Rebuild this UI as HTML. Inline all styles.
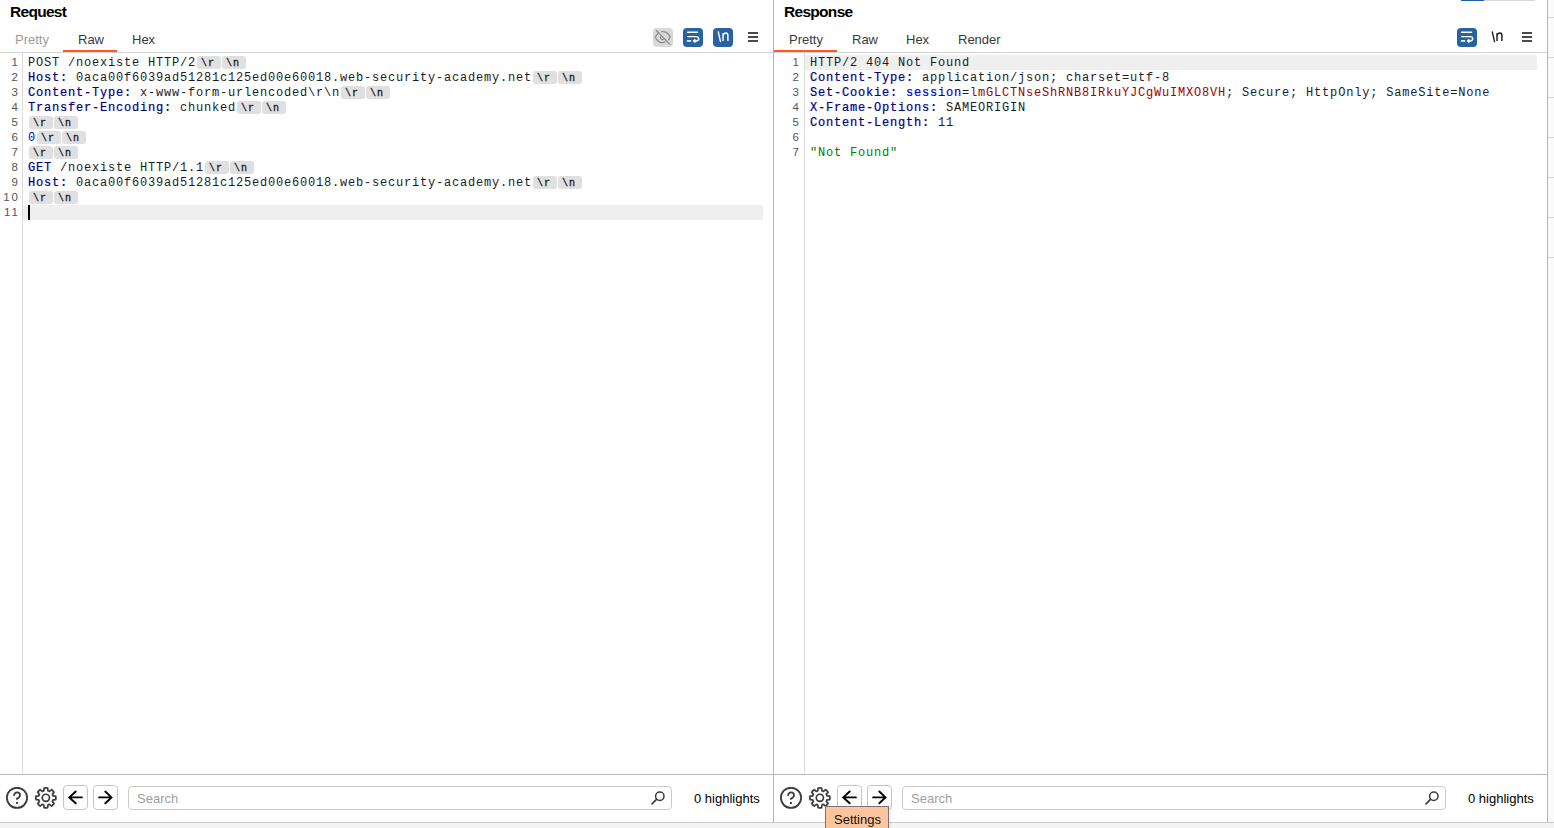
<!DOCTYPE html>
<html><head><meta charset="utf-8">
<style>
*{margin:0;padding:0;box-sizing:border-box}
html,body{width:1554px;height:828px;overflow:hidden;background:#fff;position:relative;font-family:"Liberation Sans",sans-serif;color:#333}
.a{position:absolute}
.title{font-weight:bold;font-size:15.5px;letter-spacing:-0.7px;color:#000;line-height:16px}
.tab{font-size:13px;line-height:15px;color:#3a3a3a;white-space:nowrap}
.hl{background:#efefef}
.code{font-family:"Liberation Mono",monospace;font-size:12px;letter-spacing:0.8px;line-height:15px;white-space:pre;color:#1c1c1c}
.ln{font-size:11.5px;line-height:15px;color:#555;text-align:right;width:20px;letter-spacing:2px}
.k{color:#000080;-webkit-text-stroke:0.2px #000080}
.b{color:#0000d0}
.v{color:#a00000}
.g{color:#008000}
.bd{display:inline-block;width:24px;height:13px;margin-left:1px;background:#e0e0e0;border-radius:3px;vertical-align:top;margin-top:0;font-size:10px;letter-spacing:1px;line-height:16px;text-align:left;padding-left:4px;-webkit-text-stroke:0.3px #1a1a1a;color:#1a1a1a}
.ib{width:20px;height:19px;border-radius:4px;background:#2d6198}
.ham{width:10px;height:2px;background:#4a4a4a}
.btn{border:1px solid #c8c4c4;border-radius:4px;width:25px;height:25px}
.search{border:1px solid #cfcaca;border-radius:4px;height:24px}
.ph{font-size:13px;color:#a0a0a0;line-height:15px}
</style></head><body>

<!-- REQUEST PANEL -->
<div class="a title" style="left:10px;top:4px">Request</div>
<div class="a tab" style="left:15px;top:32px;color:#9c9c9c">Pretty</div>
<div class="a tab" style="left:78px;top:32px">Raw</div>
<div class="a tab" style="left:132px;top:32px">Hex</div>
<div class="a" style="left:63px;top:50px;width:54px;height:2px;background:#ff5722"></div>
<div class="a" style="left:0;top:52px;width:773px;height:1px;background:#cfd4d4"></div>

<!-- request toolbar -->
<svg class="a" style="left:653px;top:28px" width="20" height="19" viewBox="0 0 20 19"><rect width="20" height="19" rx="4" fill="#d9d9d9"/><path d="M5.2,5.6C3.9,6.7 2.9,8 2.3,9.2C3.8,12.6 6.5,14.6 9.5,14.6C10.6,14.6 11.6,14.3 12.5,13.8M8.3,3.6C8.7,3.5 9.1,3.5 9.5,3.5C12.8,3.5 15.6,5.6 17.2,9C16.7,10.2 16.1,11.2 15.2,12.1" fill="none" stroke="#8a8a8a" stroke-width="1.25"/><path d="M7.6,8.3A2.3,2.3 0 0 0 10.6,11.4" fill="none" stroke="#8a8a8a" stroke-width="1.25"/><path d="M3,2.3L17.2,16.6" stroke="#8a8a8a" stroke-width="1.25"/></svg>
<svg class="a" style="left:683px;top:28px" width="20" height="19" viewBox="0 0 20 19"><rect width="20" height="19" rx="4" fill="#2962a0"/><path d="M4.6,4.3H14.6M4.6,8.6H13.1C14.7,8.6 15.7,9.6 15.7,10.8C15.7,12.1 14.7,12.9 13.1,12.9H11.8" fill="none" stroke="#fff" stroke-width="1.45" stroke-linecap="round"/><path d="M3.9,12.9H8.1" stroke="#fff" stroke-width="1.6"/><path d="M9.9,12.9L12.1,11.1V14.7Z" fill="#fff" stroke="#fff" stroke-width="0.7" stroke-linejoin="round"/></svg>
<svg class="a" style="left:713px;top:28px" width="20" height="19" viewBox="0 0 20 19"><rect width="20" height="19" rx="4" fill="#2962a0"/><path d="M5.3,3.9L7.5,13.6" stroke="#fff" stroke-width="1.4" stroke-linecap="round"/><path d="M10,13V5.2M10,7.5C10.5,5.8 11.6,4.9 12.9,4.9C14.3,4.9 14.9,5.9 14.9,7.5V13" fill="none" stroke="#fff" stroke-width="1.45"/></svg>
<div class="a ham" style="left:748px;top:32px"></div>
<div class="a ham" style="left:748px;top:36px"></div>
<div class="a ham" style="left:748px;top:40px"></div>

<!-- request editor -->
<div class="a" style="left:22px;top:53px;width:1px;height:721px;background:#dcdcdc"></div>
<div class="a hl" style="left:23px;top:205px;width:740px;height:15px"></div>
<div class="a" style="left:28px;top:205px;width:2px;height:15px;background:#000"></div>
<div class="a ln" style="left:0;top:55px">1<br>2<br>3<br>4<br>5<br>6<br>7<br>8<br>9<br>10<br>11</div>
<div class="a code" style="left:28px;top:56px">POST /noexiste HTTP/2<span class="bd">\r</span><span class="bd">\n</span>
<span class="k">Host:</span> 0aca00f6039ad51281c125ed00e60018.web-security-academy.net<span class="bd">\r</span><span class="bd">\n</span>
<span class="k">Content-Type:</span> x-www-form-urlencoded\r\n<span class="bd">\r</span><span class="bd">\n</span>
<span class="k">Transfer-Encoding:</span> chunked<span class="bd">\r</span><span class="bd">\n</span>
<span class="bd">\r</span><span class="bd">\n</span>
<span class="b">0</span><span class="bd">\r</span><span class="bd">\n</span>
<span class="bd">\r</span><span class="bd">\n</span>
<span class="k">GET</span> /noexiste HTTP/1.1<span class="bd">\r</span><span class="bd">\n</span>
<span class="k">Host:</span> 0aca00f6039ad51281c125ed00e60018.web-security-academy.net<span class="bd">\r</span><span class="bd">\n</span>
<span class="bd">\r</span><span class="bd">\n</span>
</div>

<!-- divider -->
<div class="a" style="left:773px;top:0;width:1px;height:822px;background:#b8b2b2"></div>

<!-- RESPONSE PANEL -->
<div class="a title" style="left:784px;top:4px">Response</div>
<div class="a tab" style="left:789px;top:32px">Pretty</div>
<div class="a tab" style="left:852px;top:32px">Raw</div>
<div class="a tab" style="left:906px;top:32px">Hex</div>
<div class="a tab" style="left:958px;top:32px">Render</div>
<div class="a" style="left:774px;top:50px;width:63px;height:2px;background:#ff5722"></div>
<div class="a" style="left:774px;top:52px;width:773px;height:1px;background:#cfd4d4"></div>

<!-- response toolbar -->
<div class="a" style="left:1461px;top:0;width:23px;height:1px;background:#1f5fa8"></div>
<div class="a" style="left:1484px;top:0;width:51px;height:1px;background:#d8d8d8"></div>
<svg class="a" style="left:1457px;top:28px" width="20" height="19" viewBox="0 0 20 19"><rect width="20" height="19" rx="4" fill="#2962a0"/><path d="M4.6,4.3H14.6M4.6,8.6H13.1C14.7,8.6 15.7,9.6 15.7,10.8C15.7,12.1 14.7,12.9 13.1,12.9H11.8" fill="none" stroke="#fff" stroke-width="1.45" stroke-linecap="round"/><path d="M3.9,12.9H8.1" stroke="#fff" stroke-width="1.6"/><path d="M9.9,12.9L12.1,11.1V14.7Z" fill="#fff" stroke="#fff" stroke-width="0.7" stroke-linejoin="round"/></svg>
<svg class="a" style="left:1487px;top:28px" width="20" height="19" viewBox="0 0 20 19"><path d="M5.3,3.9L7.5,13.6" stroke="#1e1e1e" stroke-width="1.4" stroke-linecap="round"/><path d="M10,13V5.2M10,7.5C10.5,5.8 11.6,4.9 12.9,4.9C14.3,4.9 14.9,5.9 14.9,7.5V13" fill="none" stroke="#1e1e1e" stroke-width="1.45"/></svg>
<div class="a ham" style="left:1522px;top:32px"></div>
<div class="a ham" style="left:1522px;top:36px"></div>
<div class="a ham" style="left:1522px;top:40px"></div>

<!-- response editor -->
<div class="a" style="left:804px;top:53px;width:1px;height:721px;background:#dcdcdc"></div>
<div class="a hl" style="left:805px;top:55px;width:732px;height:15px"></div>
<div class="a ln" style="left:781px;top:55px">1<br>2<br>3<br>4<br>5<br>6<br>7</div>
<div class="a code" style="left:810px;top:56px">HTTP/2 404 Not Found
<span class="k">Content-Type:</span> application/json; charset=utf-8
<span class="k">Set-Cookie:</span> <span class="b" style="-webkit-text-stroke:0.2px #0000d0">session</span>=<span class="v">lmGLCTNseShRNB8IRkuYJCgWuIMXO8VH</span>; Secure; HttpOnly; SameSite=None
<span class="k">X-Frame-Options:</span> SAMEORIGIN
<span class="k">Content-Length:</span> 11

<span class="g">"Not Found"</span>
</div>

<!-- right strip -->
<div class="a" style="left:1547px;top:0;width:1px;height:822px;background:#b8b2b2"></div>
<div class="a" style="left:1548px;top:0;width:6px;height:822px;background:#fafafa"></div>
<div class="a" style="left:1548px;top:17px;width:6px;height:1px;background:#d0d0d0"></div>
<div class="a" style="left:1548px;top:57px;width:6px;height:1px;background:#d0d0d0"></div>
<div class="a" style="left:1548px;top:97px;width:6px;height:1px;background:#d0d0d0"></div>
<div class="a" style="left:1548px;top:137px;width:6px;height:1px;background:#d0d0d0"></div>
<div class="a" style="left:1548px;top:177px;width:6px;height:1px;background:#d0d0d0"></div>
<div class="a" style="left:1548px;top:217px;width:6px;height:1px;background:#d0d0d0"></div>
<div class="a" style="left:1548px;top:257px;width:6px;height:1px;background:#d0d0d0"></div>

<!-- BOTTOM BARS -->
<div class="a" style="left:0;top:774px;width:1547px;height:1px;background:#c0b8b8"></div>
<div class="a" style="left:0;top:822px;width:1554px;height:1px;background:#cfcaca"></div>
<div class="a" style="left:0;top:823px;width:1554px;height:5px;background:#f4f4f4"></div>

<!-- request bottom -->
<svg class="a" style="left:6px;top:787px" width="22" height="22" viewBox="0 0 22 22"><circle cx="11" cy="10.85" r="10.1" fill="none" stroke="#3c3c3c" stroke-width="1.8"/><path d="M8.1,8.2C8.4,6.4 9.7,5.4 11.1,5.4C12.7,5.4 14,6.6 14,8.2C14,9.9 12.6,10.9 10.8,11.9" fill="none" stroke="#3c3c3c" stroke-width="1.8" stroke-linecap="round"/><rect x="10" y="15" width="1.9" height="1.9" fill="#3c3c3c"/></svg>
<svg class="a" style="left:34px;top:786px" width="24" height="24" viewBox="0 0 24 24"><path d="M9.83,4.76L10.13,2.02A10.00,10.00 0 0 1 13.61,2.02L13.91,4.76A7.40,7.40 0 0 1 15.46,5.40L17.61,3.68A10.00,10.00 0 0 1 20.06,6.13L18.34,8.28A7.40,7.40 0 0 1 18.98,9.83L21.72,10.13A10.00,10.00 0 0 1 21.72,13.61L18.98,13.91A7.40,7.40 0 0 1 18.34,15.46L20.06,17.61A10.00,10.00 0 0 1 17.61,20.06L15.46,18.34A7.40,7.40 0 0 1 13.91,18.98L13.61,21.72A10.00,10.00 0 0 1 10.13,21.72L9.83,18.98A7.40,7.40 0 0 1 8.28,18.34L6.13,20.06A10.00,10.00 0 0 1 3.68,17.61L5.40,15.46A7.40,7.40 0 0 1 4.76,13.91L2.02,13.61A10.00,10.00 0 0 1 2.02,10.13L4.76,9.83A7.40,7.40 0 0 1 5.40,8.28L3.68,6.13A10.00,10.00 0 0 1 6.13,3.68L8.28,5.40Z" fill="none" stroke="#3c3c3c" stroke-width="1.75" stroke-linejoin="round"/><circle cx="11.87" cy="11.87" r="3.6" fill="none" stroke="#3c3c3c" stroke-width="1.7"/></svg>
<svg class="a" style="left:63px;top:785px" width="25" height="25" viewBox="0 0 25 25"><path d="M18.9,12.4H6.3M12.7,6.5L6.3,12.4L12.7,18.3" fill="none" stroke="#000" stroke-width="1.9" stroke-linecap="round" stroke-linejoin="miter"/></svg>
<svg class="a" style="left:93px;top:785px" width="25" height="25" viewBox="0 0 25 25"><path d="M6.1,12.4H18.5M12.3,6.5L18.5,12.4L12.3,18.3" fill="none" stroke="#000" stroke-width="1.9" stroke-linecap="round" stroke-linejoin="miter"/></svg>
<svg class="a" style="left:640px;top:782px" width="32" height="32" viewBox="0 0 32 32"><circle cx="19.8" cy="14.2" r="4.2" fill="none" stroke="#3c3c3c" stroke-width="1.5"/><path d="M16.3,17.6L12,21.9" stroke="#3c3c3c" stroke-width="1.6" stroke-linecap="round"/></svg>

<div class="a btn" style="left:63px;top:785px"></div>
<div class="a btn" style="left:93px;top:785px"></div>
<div class="a search" style="left:128px;top:786px;width:544px"></div>
<div class="a ph" style="left:137px;top:791px">Search</div>
<div class="a tab" style="left:694px;top:791px;color:#000">0 highlights</div>

<!-- response bottom -->
<svg class="a" style="left:780px;top:787px" width="22" height="22" viewBox="0 0 22 22"><circle cx="11" cy="10.85" r="10.1" fill="none" stroke="#3c3c3c" stroke-width="1.8"/><path d="M8.1,8.2C8.4,6.4 9.7,5.4 11.1,5.4C12.7,5.4 14,6.6 14,8.2C14,9.9 12.6,10.9 10.8,11.9" fill="none" stroke="#3c3c3c" stroke-width="1.8" stroke-linecap="round"/><rect x="10" y="15" width="1.9" height="1.9" fill="#3c3c3c"/></svg>
<svg class="a" style="left:808px;top:786px" width="24" height="24" viewBox="0 0 24 24"><path d="M9.83,4.76L10.13,2.02A10.00,10.00 0 0 1 13.61,2.02L13.91,4.76A7.40,7.40 0 0 1 15.46,5.40L17.61,3.68A10.00,10.00 0 0 1 20.06,6.13L18.34,8.28A7.40,7.40 0 0 1 18.98,9.83L21.72,10.13A10.00,10.00 0 0 1 21.72,13.61L18.98,13.91A7.40,7.40 0 0 1 18.34,15.46L20.06,17.61A10.00,10.00 0 0 1 17.61,20.06L15.46,18.34A7.40,7.40 0 0 1 13.91,18.98L13.61,21.72A10.00,10.00 0 0 1 10.13,21.72L9.83,18.98A7.40,7.40 0 0 1 8.28,18.34L6.13,20.06A10.00,10.00 0 0 1 3.68,17.61L5.40,15.46A7.40,7.40 0 0 1 4.76,13.91L2.02,13.61A10.00,10.00 0 0 1 2.02,10.13L4.76,9.83A7.40,7.40 0 0 1 5.40,8.28L3.68,6.13A10.00,10.00 0 0 1 6.13,3.68L8.28,5.40Z" fill="none" stroke="#3c3c3c" stroke-width="1.75" stroke-linejoin="round"/><circle cx="11.87" cy="11.87" r="3.6" fill="none" stroke="#3c3c3c" stroke-width="1.7"/></svg>
<svg class="a" style="left:837px;top:785px" width="25" height="25" viewBox="0 0 25 25"><path d="M18.9,12.4H6.3M12.7,6.5L6.3,12.4L12.7,18.3" fill="none" stroke="#000" stroke-width="1.9" stroke-linecap="round" stroke-linejoin="miter"/></svg>
<svg class="a" style="left:867px;top:785px" width="25" height="25" viewBox="0 0 25 25"><path d="M6.1,12.4H18.5M12.3,6.5L18.5,12.4L12.3,18.3" fill="none" stroke="#000" stroke-width="1.9" stroke-linecap="round" stroke-linejoin="miter"/></svg>
<svg class="a" style="left:1414px;top:782px" width="32" height="32" viewBox="0 0 32 32"><circle cx="19.8" cy="14.2" r="4.2" fill="none" stroke="#3c3c3c" stroke-width="1.5"/><path d="M16.3,17.6L12,21.9" stroke="#3c3c3c" stroke-width="1.6" stroke-linecap="round"/></svg>

<div class="a btn" style="left:837px;top:785px"></div>
<div class="a btn" style="left:867px;top:785px"></div>
<div class="a search" style="left:902px;top:786px;width:544px"></div>
<div class="a ph" style="left:911px;top:791px">Search</div>
<div class="a tab" style="left:1468px;top:791px;color:#000">0 highlights</div>

<!-- tooltip -->
<div class="a" style="left:825px;top:806px;width:64px;height:30px;background:#fdc59b;border:1px solid #7d7070;box-shadow:2px 1px 3px rgba(0,0,0,0.07)"></div>
<div class="a tab" style="left:834px;top:812px;color:#111">Settings</div>

</body></html>
